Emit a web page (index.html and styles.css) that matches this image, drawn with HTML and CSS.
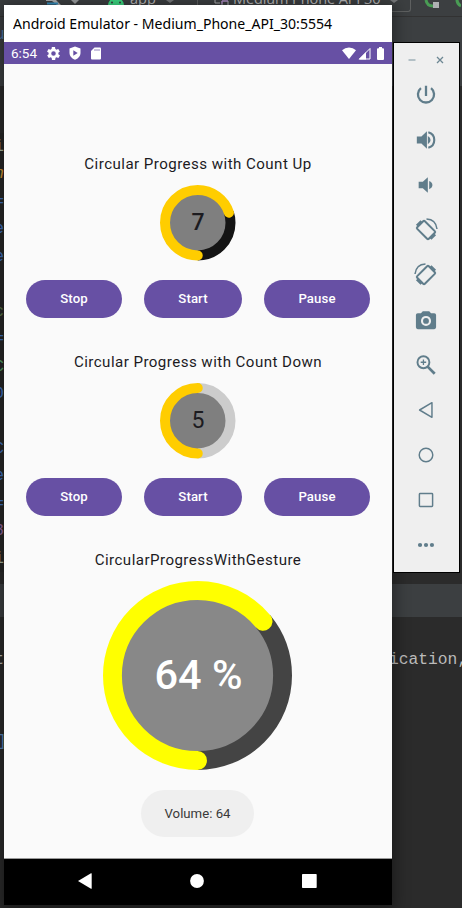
FILE: index.html
```
<!DOCTYPE html>
<html lang="en">
<head>
<meta charset="utf-8">
<title>Android Emulator</title>
<link rel="stylesheet" href="styles.css">
</head>
<body>
<div class="desktop">
  <div class="ide">
    <div class="ide-toolbar">
      <svg class="hammer" width="26" height="6" viewBox="0 0 26 6"><path d="M0 0H10L15 5H11L6 1H0Z" fill="#afb1b3"/><path d="M1 3.5H12" stroke="#3592c4" stroke-width="2"/></svg>
      <svg class="caret" width="8" height="5" viewBox="0 0 8 5"><path d="M0 0H8L4 4Z" fill="#9da0a2"/></svg>
      <span class="run-config">
        <svg width="18" height="6" viewBox="0 0 18 6"><path d="M1 6C1 1 4-2 9-2S17 1 17 6Z" fill="#3ddc84"/><circle cx="5" cy="2.5" r="1" fill="#3c3f41"/><circle cx="13" cy="2.5" r="1" fill="#3c3f41"/></svg>
        <span class="label">app</span>
        <svg class="c2" width="8" height="5" viewBox="0 0 8 5"><path d="M0 0H8L4 3Z" fill="#77797b"/></svg>
      </span>
      <span class="device">
        <svg width="16" height="6" viewBox="0 0 16 6"><path d="M1 0V3H6M8 5V1H14V5" fill="none" stroke="#afb1b3"/><path d="M8 4V1H14" fill="none" stroke="#b07fd0"/></svg>
        <span class="label">Medium Phone API 30</span>
        <svg class="c3" width="8" height="5" viewBox="0 0 8 5"><path d="M0 0H8L4 3Z" fill="#77797b"/></svg>
      </span>
      <svg class="rerun" width="37" height="10" viewBox="0 0 37 10"><path d="M2 0Q3 6 9 6" fill="none" stroke="#499c54" stroke-width="3"/><rect x="9" y="2" width="6" height="6" fill="#afb1b3"/><path d="M33 0Q33 4 37 6" fill="none" stroke="#499c54" stroke-width="3"/></svg>
    </div>
    <div class="ide-tabs"><span>u</span></div>
    <div class="ide-editor">
      <div class="gutter">
        <span class="k-w">i</span><span class="k-o">n</span><span>=</span><span>e</span><span>e</span><span></span><span class="k-g">c</span><span>=</span><span class="k-g2">C</span><span>0</span><span></span><span>C</span><span>e</span><span>=</span><span class="k-p">8</span><span class="k-w">i</span>
      </div>
    </div>
    <div class="ide-band"></div>
    <div class="ide-console">
      <div class="row"><span class="head">t</span><span class="tail">ication,</span></div>
      <div class="row link"><span class="head bracket">]</span></div>
    </div>
  </div>

  <main class="emulator">
    <header class="titlebar"><span>Android Emulator - Medium_Phone_API_30:5554</span></header>
    <div class="statusbar">
      <span class="clock">6:54</span>
      <svg class="gear" width="13" height="13" viewBox="2 2 20 20"><path fill="#fff" d="M19.4 13c0-.3.1-.6.1-1s0-.7-.1-1l2.1-1.6c.2-.1.2-.4.1-.6l-2-3.5c-.1-.2-.4-.3-.6-.2l-2.5 1c-.5-.4-1.1-.7-1.7-1l-.4-2.6c0-.3-.2-.5-.5-.5h-4c-.2 0-.4.2-.5.4l-.4 2.7c-.6.2-1.1.6-1.7 1l-2.5-1c-.2-.1-.4 0-.6.2l-2 3.5c-.1.2 0 .4.1.6L4.6 11c0 .3-.1.6-.1 1s0 .7.1 1l-2.1 1.6c-.2.1-.2.4-.1.6l2 3.5c.1.2.3.3.6.2l2.5-1c.5.4 1.1.7 1.7 1l.4 2.6c0 .3.2.5.5.5h4c.2 0 .5-.2.5-.4l.4-2.7c.6-.2 1.1-.6 1.7-1l2.5 1c.2.1.5 0 .6-.2l2-3.5c.1-.2 0-.5-.1-.6zM12 15.500a3.500 3.500 0 1 1 0-7 3.500 3.500 0 0 1 0 7z"/></svg>
      <svg class="shield" width="12" height="14" viewBox="0 0 12 14"><path fill="#fff" d="M6 .5L11.5 2.5V7C11.5 10 9 12.7 6 13.7C3 12.7.5 10 .5 7V2.5Z"/><path d="M4.3 4.2V9.8L8.7 7Z" fill="#6750a4"/></svg>
      <svg class="sd" width="10" height="13" viewBox="0 0 10 13"><path fill="#fff" d="M3.5 .5H9Q10 .5 10 1.5V11.5Q10 12.5 9 12.5H1Q0 12.5 0 11.5V4Z"/><path d="M4 2V4M6 2V4M8 2V4" stroke="#6750a4" stroke-width=".7"/></svg>
      <svg class="wifi" width="14" height="12" viewBox="0 0 14 12"><path fill="#fff" d="M7 12L0 3.3Q3 .5 7 .5T14 3.3Z"/></svg>
      <svg class="signal" width="13" height="13" viewBox="0 0 13 13"><path fill="none" stroke="#fff" d="M1.5 12L12 1.5V12Z"/><path fill="#fff" d="M.5 12.5L8 5V12.5Z"/></svg>
      <svg class="battery" width="7" height="13" viewBox="0 0 7 13"><path fill="#fff" d="M2 0H5V1.3H6Q7 1.3 7 2.3V12Q7 13 6 13H1Q0 13 0 12V2.3Q0 1.3 1 1.3H2Z"/></svg>
    </div>

    <div class="screen">
      <section class="block">
        <h2>Circular Progress with Count Up</h2>
        <div class="dial">
          <svg viewBox="0 0 80 80"><circle cx="40" cy="40" r="31" fill="#7f7f7f"/><g transform="rotate(90 40 40)"><circle cx="40" cy="40" r="34.7" pathLength="100" stroke-dasharray="30 70" stroke-dashoffset="-70" class="track dark"/><circle cx="40" cy="40" r="34.7" pathLength="100" stroke-dasharray="70 100" class="arc"/></g></svg>
          <span>7</span>
        </div>
        <div class="buttons"><button class="stop">Stop</button><button class="start">Start</button><button class="pause">Pause</button></div>
      </section>
      <section class="block">
        <h2 class="down">Circular Progress with Count Down</h2>
        <div class="dial">
          <svg viewBox="0 0 80 80"><circle cx="40" cy="40" r="31" fill="#7f7f7f"/><g transform="rotate(90 40 40)"><circle cx="40" cy="40" r="34.7" pathLength="100" stroke-dasharray="50 50" stroke-dashoffset="-50" class="track light"/><circle cx="40" cy="40" r="34.7" pathLength="100" stroke-dasharray="50 100" class="arc"/></g></svg>
          <span class="thin">5</span>
        </div>
        <div class="buttons"><button class="stop">Stop</button><button class="start">Start</button><button class="pause">Pause</button></div>
      </section>
      <section class="block">
        <h2 class="gesture">CircularProgressWithGesture</h2>
        <div class="dial big">
          <svg viewBox="0 0 200 200"><circle cx="100" cy="100" r="82" fill="#888"/><g transform="rotate(90 100 100)"><circle cx="100" cy="100" r="90" pathLength="100" stroke-dasharray="36 64" stroke-dashoffset="-64" class="track gray"/><circle cx="100" cy="100" r="90" pathLength="100" stroke-dasharray="64 100" class="arc yellow"/></g></svg>
          <span>64 %</span>
        </div>
      </section>
      <div class="toast">Volume: 64</div>
    </div>

    <nav class="navbar">
      <svg width="14" height="16" viewBox="0 0 14 16"><path d="M0 8L13 0.3Q13.7 0 13.7 .8V15.2Q13.7 16 13 15.7Z" fill="#fff"/></svg>
      <svg width="14" height="14" viewBox="0 0 14 14"><circle cx="7" cy="7" r="6.9" fill="#fff"/></svg>
      <svg width="15" height="14" viewBox="0 0 15 14"><rect width="14.7" height="14" rx=".7" fill="#fff"/></svg>
    </nav>
  </main>

  <aside class="tools">
    <div class="winctl">
      <svg width="8" height="8" viewBox="0 0 8 8"><path d="M.5 4H7.5" stroke="#9fb0b8" stroke-width="1.5"/></svg>
      <svg width="8" height="8" viewBox="0 0 8 8"><path d="M1 1L7 7M7 1L1 7" stroke="#6d8793" stroke-width="1.3"/></svg>
    </div>
    <div class="tool"><svg viewBox="0 0 24 24"><path fill="none" stroke="#607d8b" stroke-width="2.5" d="M12 2V13M6.500 4.500A8.800 8.800 0 1 0 17.500 4.500"/></svg></div>
    <div class="tool"><svg viewBox="0 0 24 24"><path d="M2 8.300H7L13 2.500V21.500L7 15.700H2Z" fill="#607d8b"/><path d="M14 7.500Q17 9 17 12T14 16.500Z" fill="#607d8b"/><path d="M14.500 3.500A8.800 8.800 0 0 1 14.500 20.500" fill="none" stroke="#607d8b" stroke-width="2.300"/></svg></div>
    <div class="tool"><svg viewBox="0 0 24 24"><path d="M4 8.500H8.500L14 3.500V20.500L8.500 15.500H4Z" fill="#607d8b"/><path d="M15.500 7.500Q19 9 19 12T15.500 16.500Z" fill="#607d8b"/></svg></div>
    <div class="tool"><svg class="wide" viewBox="0 0 24 24"><g fill="none" stroke="#607d8b"><rect x="6.600" y="3.800" width="10.800" height="16.400" rx="1.200" transform="rotate(-45 12 12)" stroke-width="2"/><path d="M7.600 3.200L3 7.800M21 16.200L16.400 20.800" stroke-width="3"/><path d="M12.500 1Q22 1.500 23 11" stroke-width="1.500"/></g></svg></div>
    <div class="tool"><svg class="wide" viewBox="0 0 24 24"><g fill="none" stroke="#607d8b"><rect x="6.600" y="3.800" width="10.800" height="16.400" rx="1.200" transform="rotate(45 12 12)" stroke-width="2"/><path d="M16.400 3.200L21 7.800M3 16.200L7.600 20.800" stroke-width="3"/><path d="M11.500 1Q2 1.500 1 11" stroke-width="1.500"/></g></svg></div>
    <div class="tool"><svg viewBox="0 0 24 24"><path fill="#607d8b" fill-rule="evenodd" d="M8.500 2.500H15.500L17.500 4.500H21Q23 4.500 23 6.500V20Q23 22 21 22H3Q1 22 1 20V6.500Q1 4.500 3 4.500H6.500ZM12 7.500A5.500 5.500 0 1 0 12 18.500A5.500 5.500 0 1 0 12 7.500ZM12 9.800A3.200 3.200 0 1 1 12 16.200A3.200 3.200 0 1 1 12 9.800Z"/></svg></div>
    <div class="tool"><svg viewBox="0 0 24 24"><g fill="none" stroke="#607d8b"><circle cx="9.200" cy="9" r="6.500" stroke-width="2.100"/><path d="M13.500 13.500L21.500 21.500" stroke-width="3"/><path d="M9.200 6V12M6.200 9H12.200" stroke-width="1.400"/></g></svg></div>
    <div class="tool"><svg viewBox="0 0 24 24"><path d="M5 12L18.5 4V20Z" fill="none" stroke="#607d8b" stroke-width="1.6" stroke-linejoin="round"/></svg></div>
    <div class="tool"><svg viewBox="0 0 24 24"><circle cx="12" cy="12" r="7.4" fill="none" stroke="#607d8b" stroke-width="1.6"/></svg></div>
    <div class="tool"><svg viewBox="0 0 24 24"><rect x="4.8" y="4.800" width="14.400" height="14.400" rx=".8" fill="none" stroke="#607d8b" stroke-width="1.6"/></svg></div>
    <div class="tool"><svg viewBox="0 0 24 24"><g fill="#607d8b"><circle cx="5.500" cy="12" r="2.300"/><circle cx="12" cy="12" r="2.300"/><circle cx="18.500" cy="12" r="2.300"/></g></svg></div>
  </aside>
</div>
</body>
</html>
```
FILE: styles.css
```
* { box-sizing: border-box; }
body { margin: 0; background: #2b2b2b; }
svg { display: block; flex: none; }
.desktop { position: relative; width: 462px; height: 908px; overflow: hidden; }

/* IDE behind the emulator */
.ide { display: flex; flex-direction: column; height: 908px; font-family: "Liberation Mono", monospace; font-size: 16.3px; }
.ide-toolbar { height: 17px; flex: none; background: #3c3f41; border-bottom: 1px solid #323232; display: flex; align-items: flex-start; padding-left: 46px; overflow: hidden; font-family: "Open Sans", sans-serif; font-size: 14.5px; color: #bbb; }
.caret { margin-left: -1px; }
.run-config { display: flex; margin-left: 28px; width: 84px; }
.label { line-height: 20px; margin-top: -11px; white-space: nowrap; }
.run-config .label { margin-left: 5px; }
.c2 { margin-left: 10px; }
.device { display: flex; width: 214px; height: 12px; border: solid #5e6060; border-width: 0 1px 1px; border-radius: 0 0 3px 3px; padding-left: 16px; margin-left: 6px; }
.device .label { letter-spacing: -.1px; width: 148px; margin-left: 3px; }
.c3 { margin-left: 9px; }
.rerun { margin-left: 13px; }
.ide-tabs { height: 69px; flex: none; background: #3c3f41; padding-top: 9px; color: #4a78a8; line-height: 18px; }
.ide-tabs span { margin-left: -5px; }
.ide-editor { height: 498px; flex: none; padding-top: 47px; background: #2b2b2b; }
.gutter { width: 4px; display: flex; flex-direction: column; align-items: flex-end; overflow: hidden; color: #4275c4; background: #272727; }
.gutter span { height: 27.45px; line-height: 27.45px; flex: none; }
.gutter .k-w { color: #a9b7a0; }
.gutter .k-o { color: #d89a35; font-style: italic; }
.gutter .k-g { color: #5d7a4b; }
.gutter .k-g2 { color: #57a66b; }
.gutter .k-p { color: #94659c; }
.ide-band { height: 33px; flex: none; background: #3c3f41; }
.ide-console { flex: 1; background: #2b2b2b; padding-top: 30px; color: #bbb; }
.row { display: flex; height: 82px; line-height: 26px; }
.row .head { width: 4px; flex: none; display: flex; justify-content: flex-end; overflow: hidden; }
.row .bracket { padding-right: 0; text-indent: 0; justify-content: flex-start; margin-left: -3px; width: 7px; }
.row .tail { margin-left: 385px; }
.link { color: #5584b8; }

/* Emulator window */
.emulator { position: absolute; left: 4px; top: 5px; width: 388px; height: 900px; display: flex; flex-direction: column; background: #000; box-shadow: 0 2px 14px 3px rgba(0,0,0,.38); font-family: Roboto, sans-serif; }
.titlebar { height: 37px; flex: none; background: #fff; padding-left: 9px; line-height: 37px; font-family: "Noto Sans", sans-serif; font-size: 15.3px; color: #000; white-space: nowrap; }
.titlebar span { display: inline-block; transform: scaleX(.92); transform-origin: left; }
.statusbar { height: 22px; flex: none; background: #6750a4; display: flex; align-items: center; padding: 0 8px 0 7px; color: #fff; }
.clock { font-size: 13.5px; width: 27px; }
.gear { margin-left: 9px; }
.shield { margin-left: 9px; }
.sd { margin-left: 10px; }
.wifi { margin-left: auto; }
.signal { margin-left: 2px; }
.battery { margin-left: 6px; }
.screen { height: 795px; flex: none; padding-top: 89px; display: flex; flex-direction: column; align-items: center; background: #fafafa; border-bottom: 1px solid #999; }
.block { height: 198px; flex: none; width: 100%; display: flex; flex-direction: column; align-items: center; }
.block:nth-child(3) { height: 240.5px; }
h2 { margin: 0 0 9px; font-size: 15.1px; font-weight: 400; line-height: 23px; height: 23px; letter-spacing: .45px; color: #1c1b1f; white-space: nowrap; }
.dial { display: grid; place-items: center; width: 75.5px; height: 75.5px; flex: none; }
.dial > * { grid-area: 1 / 1; }
.dial svg { width: 100%; height: 100%; }
.dial span { font-size: 23px; font-weight: 500; color: #1c1b1f; }
.dial .thin { font-weight: 400; }
.track, .arc { fill: none; stroke-width: 10.6; }
.dark { stroke: #141414; }
.light { stroke: #ccc; }
.arc { stroke: #ffcd00; stroke-linecap: round; }
.big { width: 189px; height: 189px; margin-right: 1px; }
.big .track, .big .arc { stroke-width: 20; }
.big .gray { stroke: #444; }
.big .yellow { stroke: #ff0; }
.big span { font-size: 41.5px; color: #fff; margin: -2px 0 0 2px; }
.buttons { display: flex; gap: 22px; margin-top: 19.5px; }
button { height: 37.5px; border: 0; padding: 0; border-radius: 19px; background: #6750a4; color: #fff; font: 500 13.2px Roboto, sans-serif; letter-spacing: .1px; }
.stop { width: 96px; }
.start { width: 98px; }
.pause { width: 106px; }
.toast { width: 113px; height: 47px; flex: none; margin-right: 1px; border-radius: 23.5px; background: #efefef; color: #3a3a3a; text-align: center; line-height: 47px; font-size: 13.2px; }
.navbar { height: 46px; flex: none; background: #000; display: flex; justify-content: space-between; align-items: center; padding: 0 75px 2px 74px; }

/* Emulator tool window */
.tools { position: absolute; left: 393px; top: 42px; width: 67px; height: 531px; background: #efefef; border: 1px solid #000; padding-right: 1px; display: flex; flex-direction: column; align-items: center; }
.winctl { height: 29px; flex: none; display: flex; gap: 20px; padding-top: 13px; }
.tool { height: 45px; flex: none; display: grid; place-items: center; }
.tool svg { width: 22px; height: 22px; }
.tool .wide { width: 24px; height: 24px; }
```
